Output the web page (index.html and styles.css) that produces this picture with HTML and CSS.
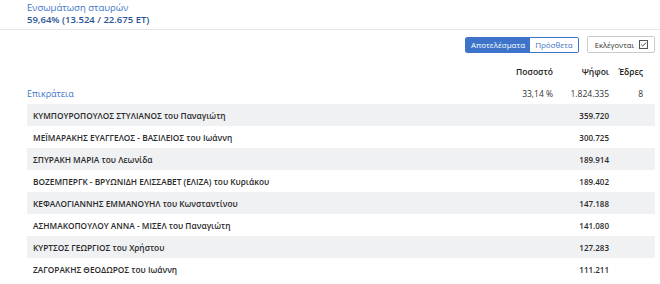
FILE: index.html
```html
<!DOCTYPE html>
<html lang="el">
<head>
  <meta charset="UTF-8" />
  <title>Αποτελέσματα</title>
  <link rel="stylesheet" href="styles.css">
</head>
<body>

  <div class="summary">
    <div class="summary-label">Ενσωμάτωση σταυρών</div>
    <div class="summary-value">59,64% (13.524 / 22.675 ΕΤ)</div>
  </div>

  <div class="wrapper">
    <div class="toolbar">
      <div class="segmented">
        <button class="seg-btn active">Αποτελέσματα</button>
        <button class="seg-btn">Πρόσθετα</button>
      </div>
      <button class="elected-btn">Εκλέγονται
        <svg width="9" height="9" viewBox="0 0 9 9">
          <rect x="0.5" y="0.5" width="8" height="8" fill="none" stroke="#555" stroke-width="1"/>
          <path d="M2.2 4.6 L3.8 6.1 L6.9 2.6" fill="none" stroke="#555" stroke-width="1"/>
        </svg>
      </button>
    </div>

    <div class="results">
      <div class="row head">
        <span class="name"></span>
        <span class="pct">Ποσοστό</span>
        <span class="votes">Ψήφοι</span>
        <span class="seats">Έδρες</span>
      </div>
      <div class="row total">
        <span class="name">Επικράτεια</span>
        <span class="pct">33,14 %</span>
        <span class="votes">1.824.335</span>
        <span class="seats">8</span>
      </div>
      <div class="row cand">
        <span class="name">ΚΥΜΠΟΥΡΟΠΟΥΛΟΣ ΣΤΥΛΙΑΝΟΣ του Παναγιώτη</span>
        <span class="pct"></span><span class="votes">359.720</span><span class="seats"></span>
      </div>
      <div class="row cand">
        <span class="name">ΜΕΪΜΑΡΑΚΗΣ ΕΥΑΓΓΕΛΟΣ - ΒΑΣΙΛΕΙΟΣ του Ιωάννη</span>
        <span class="pct"></span><span class="votes">300.725</span><span class="seats"></span>
      </div>
      <div class="row cand">
        <span class="name">ΣΠΥΡΑΚΗ ΜΑΡΙΑ του Λεωνίδα</span>
        <span class="pct"></span><span class="votes">189.914</span><span class="seats"></span>
      </div>
      <div class="row cand">
        <span class="name">ΒΟΖΕΜΠΕΡΓΚ - ΒΡΥΩΝΙΔΗ ΕΛΙΣΣΑΒΕΤ (ΕΛΙΖΑ) του Κυριάκου</span>
        <span class="pct"></span><span class="votes">189.402</span><span class="seats"></span>
      </div>
      <div class="row cand">
        <span class="name">ΚΕΦΑΛΟΓΙΑΝΝΗΣ ΕΜΜΑΝΟΥΗΛ του Κωνσταντίνου</span>
        <span class="pct"></span><span class="votes">147.188</span><span class="seats"></span>
      </div>
      <div class="row cand">
        <span class="name">ΑΣΗΜΑΚΟΠΟΥΛΟΥ ΑΝΝΑ - ΜΙΣΕΛ του Παναγιώτη</span>
        <span class="pct"></span><span class="votes">141.080</span><span class="seats"></span>
      </div>
      <div class="row cand">
        <span class="name">ΚΥΡΤΣΟΣ ΓΕΩΡΓΙΟΣ του Χρήστου</span>
        <span class="pct"></span><span class="votes">127.283</span><span class="seats"></span>
      </div>
      <div class="row cand">
        <span class="name">ΖΑΓΟΡΑΚΗΣ ΘΕΟΔΩΡΟΣ του Ιωάννη</span>
        <span class="pct"></span><span class="votes">111.211</span><span class="seats"></span>
      </div>
    </div>
  </div>

</body>
</html>
```

FILE: styles.css
```css
:root {
  --blue: #3d74c9;
  --blue-dark: #2a5596;
  --text: #222;
  --stripe: #f0f1f3;
  --line: #e4e6ea;
}

* {
  box-sizing: border-box;
  margin: 0;
  padding: 0;
}

body {
  font-family: 'Open Sans', 'Noto Sans', sans-serif;
  background: #fff;
  color: var(--text);
  width: 660px;
  height: 284px;
  overflow: hidden;
}

.summary {
  padding: 2px 0 3px 27px;
  border-bottom: 1px solid var(--line);
}

.summary-label {
  font-size: 9.5px;
  line-height: 12px;
  color: var(--blue);
}

.summary-value {
  font-size: 9.5px;
  line-height: 12px;
  font-weight: 600;
  color: var(--blue-dark);
}

.wrapper {
  padding: 0 5px 0 27px;
}

.toolbar {
  display: flex;
  justify-content: flex-end;
  align-items: center;
  gap: 8px;
  padding-top: 6px;
}

.segmented {
  display: flex;
  border: 1px solid var(--blue);
  border-radius: 2px;
  overflow: hidden;
}

.seg-btn {
  font-family: inherit;
  font-size: 8px;
  height: 14px;
  padding: 0 5px;
  border: none;
  background: #fff;
  color: var(--blue);
}

.seg-btn.active {
  background: var(--blue);
  color: #fff;
}

.elected-btn {
  font-family: inherit;
  font-size: 7.6px;
  height: 17px;
  padding: 0 6px 0 7px;
  border: 1px solid #c8ccd2;
  border-radius: 2px;
  background: #fff;
  color: #333;
  display: flex;
  align-items: center;
  gap: 5px;
}

.results {
  margin-top: 8px;
}

.row {
  display: flex;
  align-items: center;
  height: 22px;
  font-size: 8.3px;
}

.row .name {
  flex: 1;
  padding-left: 6px;
}

.row .pct {
  width: 70px;
  text-align: right;
}

.row .votes {
  width: 56px;
  text-align: right;
}

.row .seats {
  width: 46px;
  text-align: right;
  padding-right: 12px;
}

.row.head {
  height: 21px;
  font-weight: 600;
  font-size: 8.5px;
  color: #222;
}

.row.total {
  font-size: 8.5px;
  color: #333;
}

.row.total .name {
  padding-left: 0;
  color: var(--blue);
  font-size: 9px;
}

.row.cand {
  font-weight: 600;
  color: #2a2a2a;
}

.row.cand .votes {
  font-size: 8px;
}

.row.cand:nth-child(odd) {
  background: var(--stripe);
}
```
